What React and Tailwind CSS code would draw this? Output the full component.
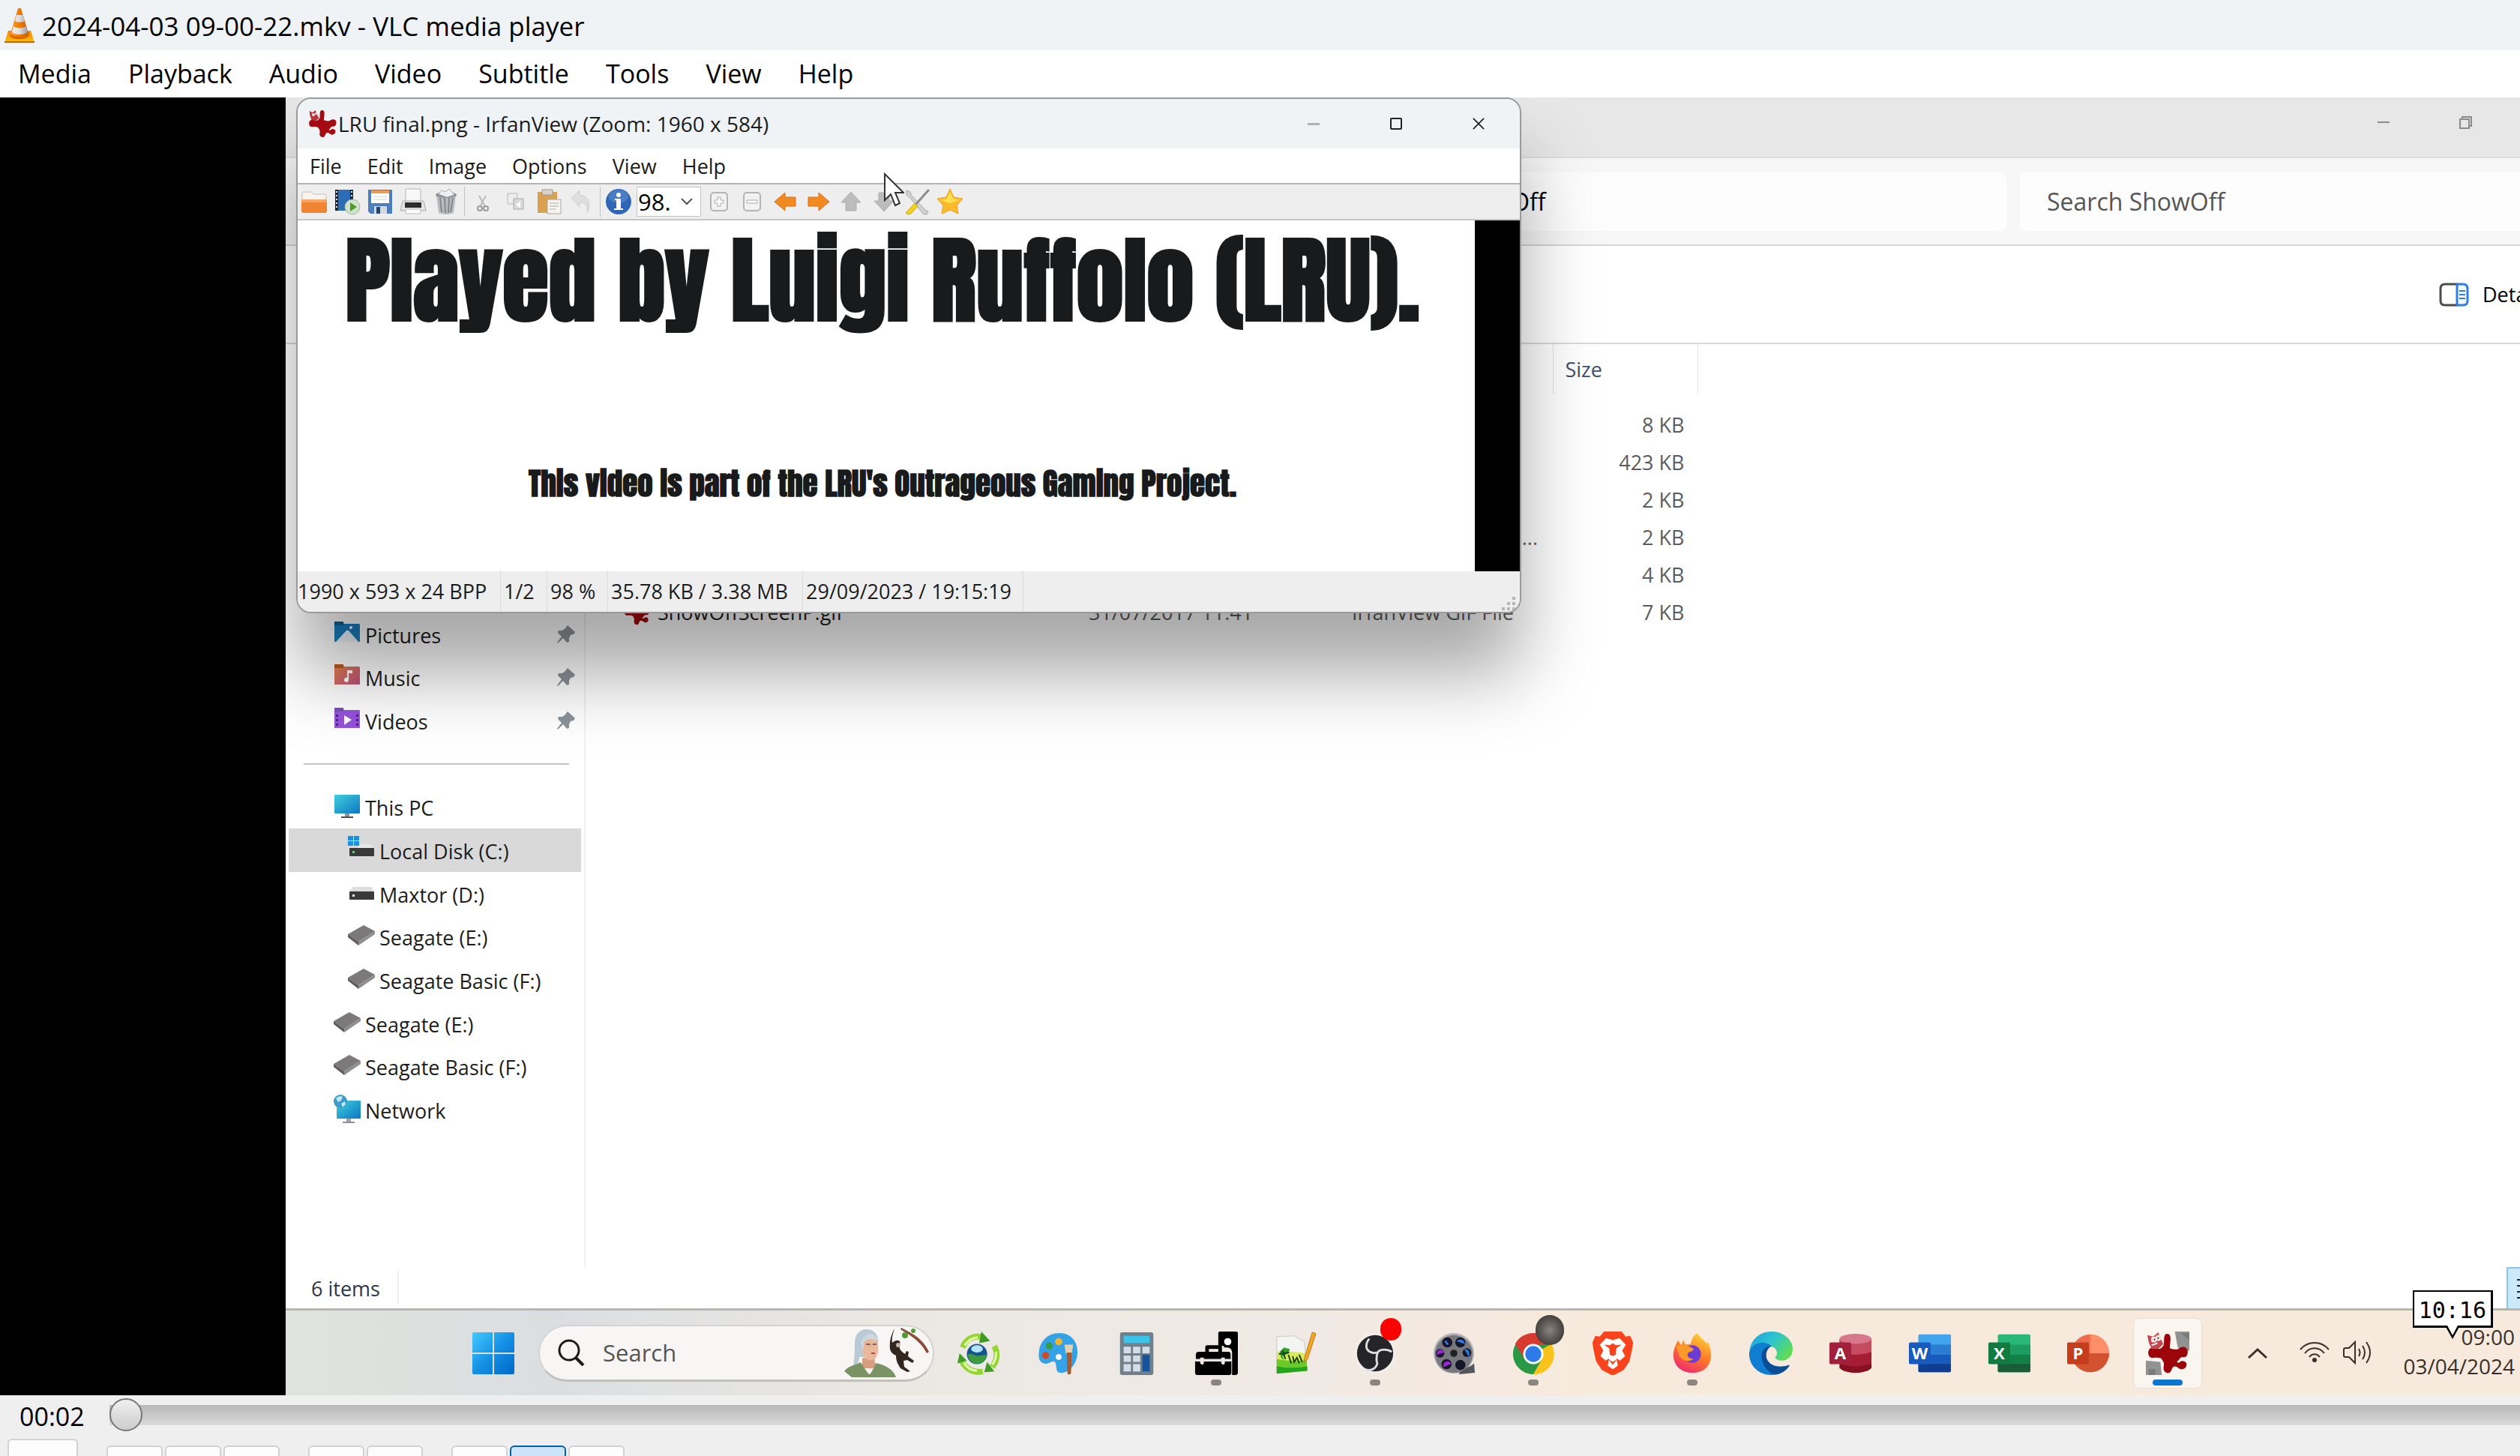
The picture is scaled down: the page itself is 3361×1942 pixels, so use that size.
import React from "react";

/* ---------- window and toolbar drawings ---------- */

const Cone = () => (
  <svg className="h-12 w-10 shrink-0" viewBox="0 0 40 48" aria-hidden="true">
    <defs>
      <linearGradient id="cone" x1="0" x2="1"><stop offset="0" stopColor="#ff9a2e" /><stop offset=".5" stopColor="#f07c00" /><stop offset="1" stopColor="#c85a00" /></linearGradient>
      <linearGradient id="coneW" x1="0" x2="1"><stop offset="0" stopColor="#f2f2f2" /><stop offset=".5" stopColor="#dcdcdc" /><stop offset="1" stopColor="#9c9c9c" /></linearGradient>
      <linearGradient id="base" x1="0" x2="0" y1="0" y2="1"><stop offset="0" stopColor="#f08010" /><stop offset="1" stopColor="#ffc400" /></linearGradient>
    </defs>
    <path d="M5 31h30l5 16H0z" fill="url(#base)" />
    <path d="M0 45h40v2H0z" fill="#b5651d" />
    <path d="M7 37c2 7 24 7 26 0l-3-7H10z" fill="#d86a00" />
    <path d="M18 1h4l10 34c-3 5-21 5-24 0z" fill="url(#cone)" />
    <path d="M16 10h9l2 8c-3 2-10 2-13 0zM12 25c4 3 12 3 17 0l2 8c-5 4-17 4-21 0z" fill="url(#coneW)" />
  </svg>
);

const SplatShape = ({ fill }) => (
  <path
    d="M29 3c4 0 5 3 5 7l-1 13c6 2 9 2 12 1 2-3 8-4 11-1 3 4 2 9-1 12-3 1-5 0-7 1l-5 6c1 2 3 1 4 0 3-3 8-1 9 2 1 4-2 8-6 8-5 0-6-4-10-4-2 0-4 2-5 6-1 3-5 4-8 2-3-2-3-6-2-10 0-4-2-6-4-9-7-2-10 0-14-1-4-2-5-8-2-12 3-3 9-1 14 0 5-3 6-5 6-9 0-6 0-12 4-12z"
    fill={fill}
  />
);

const IrfanSmall = ({ className }) => (
  <svg className={className} viewBox="0 0 60 60" aria-hidden="true">
    <SplatShape fill="#a40a10" />
    <path d="M4 4l6 4 6-5 3 8 4 8-7 6-8-3-3-9z" fill="#b9343c" />
    <circle cx="12" cy="12" r="3" fill="#eee" /><circle cx="17" cy="10" r="2" fill="#eee" />
  </svg>
);

const IrfanBig = () => (
  <svg className="size-[58px]" viewBox="0 0 60 60" aria-hidden="true">
    <path d="M40 0h20v27L44 22zM0 40l20 2 2 18H0z" fill="#929292" />
    <path d="M48 2h12v10zM4 52h9v8H4z" fill="#7b7b7b" />
    <SplatShape fill="#9c060a" />
    <path d="M2 5l8 2 7-6 3 8 4 8-7 7-9 0-4-9z" fill="#c4474e" />
    <circle cx="11" cy="11" r="4" fill="#f1e3e0" /><circle cx="17" cy="9" r="4" fill="#f1e3e0" />
    <circle cx="12" cy="11" r="1" fill="#111" /><circle cx="17" cy="9" r="1" fill="#111" />
    <path d="M8 19l8-3" stroke="#fff" strokeWidth="2" />
  </svg>
);

const T = ({ children }) => <svg className="size-9" viewBox="0 0 36 36" aria-hidden="true">{children}</svg>;

const tool = {
  open: <T><path d="M2 7q0-2 2-2h10l3 3h15q2 0 2 2v8H2z" fill="#f7f3ef" stroke="#c8bfb6" /><path d="M1 15h34v15q0 3-3 3H4q-3 0-3-3z" fill="#ef8433" /><path d="M1 15h34v4H1z" fill="#f6a566" /></T>,
  slide: <T><path d="M2 2h24v28H2z" fill="#2d6db5" /><path d="M2 2h4v28H2zM22 2h4v28h-4z" fill="#18243a" /><path d="M3 5h2M3 10h2M3 15h2M3 20h2M3 25h2M23 5h2M23 10h2" stroke="#dfe8f2" strokeWidth="2" /><circle cx="25" cy="25" r="10" fill="#cfe3cb" stroke="#9fb89a" /><path d="M22 19l9 6-9 6z" fill="#4d9a2a" /></T>,
  save: <T><path d="M2 2h32v32H5l-3-3z" fill="#4d7fbf" /><path d="M6 3h24v17H6z" fill="#fff" /><path d="M6 3h24v4H6z" fill="#ef9a4d" /><path d="M9 11h18M9 15h18" stroke="#cfcfcf" /><path d="M10 24h17v10H10z" fill="#d4d9de" /><path d="M13 25h5v9h-5z" fill="#23446e" /></T>,
  print: <T><path d="M8 1h20v18H8z" fill="#f8f8f8" stroke="#b5b5b5" /><path d="M4 17h28l3 13H1z" fill="#e4e4e4" stroke="#a8a8a8" /><path d="M7 19h22v7H7z" fill="#2c2c2c" /><path d="M8 28h20v6H8z" fill="#fafafa" stroke="#bbb" /></T>,
  trash: <T><path d="M5 9h26l-3 24q-10 4-20 0z" fill="#b9bcc0" /><path d="M10 13l2 19M16 13l1 20M22 13l-1 20M27 13l-3 19" stroke="#83878c" strokeWidth="2" /><ellipse cx="18" cy="9" rx="14" ry="4" fill="#8d9196" /><path d="M8 8l4-5 5 2 5-4 4 4 3 4-10 3z" fill="#edf1f5" stroke="#a9adb2" /></T>,
  cut: <T><path d="M13 10l8 15M22 10l-8 15" stroke="#bbb" strokeWidth="2" /><circle cx="14" cy="27" r="3" fill="none" stroke="#9c9c9c" strokeWidth="2" /><circle cx="22" cy="27" r="3" fill="none" stroke="#9c9c9c" strokeWidth="2" /></T>,
  copy: <T><path d="M7 7h13v14H7z" fill="#ededed" stroke="#b6b6b6" /><path d="M15 14h13v14H15z" fill="#d9d9d9" stroke="#a8a8a8" /><path d="M18 22l6-5v10z" fill="#fff" /></T>,
  paste: <T><path d="M3 5h26v28H3z" fill="#d8a250" /><path d="M9 2h14v7H9z" fill="#d9d5cc" stroke="#99958c" /><path d="M16 15h18v19H16z" fill="#f7f4ee" stroke="#aaa69d" /><path d="M19 20h12M19 24h12M19 28h8" stroke="#aaa" /></T>,
  undo: <T><path d="M4 13L15 3v6c12 1 16 12 10 24 1-10-2-14-10-14v6z" fill="#dedede" stroke="#d0d0d0" /></T>,
  info: <T><circle cx="18" cy="18" r="17" fill="#2f66b5" /><ellipse cx="18" cy="11" rx="13" ry="9" fill="#5489cf" opacity=".7" /><circle cx="18" cy="9" r="3" fill="#fff" /><path d="M13 14h8v13h3v2H12v-2h3V16h-2z" fill="#fff" /></T>,
  plus: <T><rect x="7" y="6" width="22" height="24" rx="4" fill="#f2f2f2" stroke="#b4b4b4" strokeWidth="2" /><path d="M16 12h4v4h4v4h-4v4h-4v-4h-4v-4h4z" fill="#fff" stroke="#a9a9a9" /></T>,
  minus: <T><rect x="7" y="6" width="22" height="24" rx="4" fill="#f2f2f2" stroke="#b4b4b4" strokeWidth="2" /><path d="M11 16h14v4H11z" fill="#fff" stroke="#a9a9a9" /></T>,
  left: <T><path d="M4 18L18 6v6h14v12H18v6z" fill="#f28a22" stroke="#d9701a" /></T>,
  right: <T><path d="M33 18L19 6v6H5v12h14v6z" fill="#f28a22" stroke="#d9701a" /></T>,
  up: <T><path d="M18 5l13 14h-6v11H11V19H5z" fill="#bcbcbc" stroke="#adadad" /></T>,
  down: <T><path d="M18 31L5 17h6V6h14v11h6z" fill="#bcbcbc" stroke="#adadad" /></T>,
  tools: <T><path d="M4 3l5 2 2 5 18 19 4 2-2 4-5-1L9 13 4 9z" fill="#d2d2d2" stroke="#a5a5a5" /><path d="M34 2L16 22" stroke="#8c8c8c" strokeWidth="3" /><path d="M15 20l4 4-9 10q-5 2-7-1z" fill="#f0d21e" stroke="#c9aa10" /></T>,
  star: <T><path d="M18 1l5 11 12 2-8 9 2 11-11-5-11 5 2-11-8-9 12-2z" fill="#fdb92c" stroke="#eda01c" /><path d="M18 4l4 10 9 2-13 4-13-4 9-2z" fill="#ffe14d" /></T>,
};

/* ---------- sidebar drawings ---------- */

const Side = ({ children }) => <svg className="h-10 w-9 shrink-0" viewBox="0 0 36 40" aria-hidden="true">{children}</svg>;

const Disk = () => (
  <Side><path d="M0 17l21-12 15 8-22 14z" fill="#7b7979" /><path d="M0 17v4l14 11v-5z" fill="#5e5c5c" /><path d="M14 32l22-15v-4L14 27z" fill="#8f8d8d" /></Side>
);

const side = {
  pictures: <Side><path d="M1 4q0-1 2-1h9l2 3h20q1 0 1 2v22H1z" fill="#1a7fc0" /><path d="M1 3h12v5H1z" fill="#0f5f99" /><path d="M3 30l14-15 3 0 13 15z" fill="#eef5fa" /><circle cx="23" cy="11" r="2" fill="#fff" /></Side>,
  music: <Side><defs><linearGradient id="mus" x1="0" y1="0" x2="1" y2="1"><stop offset="0" stopColor="#ee8450" /><stop offset="1" stopColor="#b9527e" /></linearGradient></defs><path d="M1 4q0-1 2-1h9l2 3h20q1 0 1 2v22H1z" fill="url(#mus)" /><path d="M1 3h12v5H1z" fill="#b85a1d" /><path d="M18 11h7v4h-5v9a3 3 0 1 1-2-3z" fill="#fff" /></Side>,
  videos: <Side><path d="M1 4q0-1 2-1h9l2 3h20q1 0 1 2v22H1z" fill="#9552dc" /><path d="M1 3h12v5H1z" fill="#7a52ad" /><path d="M3 12h3v3H3zM3 18h3v3H3zM3 24h3v3H3zM30 12h3v3h-3zM30 18h3v3h-3zM30 24h3v3h-3z" fill="#4b2383" /><path d="M14 13l10 6-10 7z" fill="#fff" /></Side>,
  pc: <Side><defs><linearGradient id="pc" x1="0" y1="0" x2="1" y2="1"><stop offset="0" stopColor="#3ed0dc" /><stop offset="1" stopColor="#0f75c4" /></linearGradient></defs><rect x="1" y="4" width="34" height="25" rx="1" fill="url(#pc)" /><path d="M15 29h6v4h-6z" fill="#8d9399" /><path d="M10 33h16v2H10z" fill="#4c5158" /></Side>,
  local: <Side><path d="M0 1h7v6H0zM8 1h7v6H8zM0 8h7v6H0zM8 8h7v6H8z" fill="#1c8fe0" /><path d="M17 12h14l4 5H12z" fill="#e6e6e6" /><rect x="2" y="17" width="33" height="11" rx="1" fill="#3a3a3a" /><rect x="6" y="21" width="3" height="3" fill="#57d36a" /></Side>,
  drive: <Side><path d="M7 11h24l4 6H2z" fill="#dcdcdc" /><rect x="2" y="17" width="33" height="11" rx="1" fill="#3a3a3a" /><rect x="6" y="21" width="3" height="3" fill="#eee" /></Side>,
  disk: <Disk />,
  network: <Side><rect x="4" y="8" width="32" height="24" rx="1" fill="url(#pc)" /><path d="M17 32h6v4h-6z" fill="#a0a5aa" /><path d="M12 36h16v2H12z" fill="#8a9096" /><circle cx="9" cy="9" r="9" fill="#3b9cc9" /><path d="M3 5q5-5 9-2l-2 5-4 2zM10 12l5-3 1 4-4 4z" fill="#bfe4f2" /></Side>,
};

const Pin = () => (
  <svg className="size-7" viewBox="0 0 28 28" aria-hidden="true">
    <path d="M16 2l10 9-2 3-4 1-2 4v5l-3 1-5-6-7 7-1-1 6-8-5-5 1-3h5l4-3z" fill="#8b9299" />
  </svg>
);

const places = [
  ["Pictures", "pictures", "pin"],
  ["Music", "music", "pin"],
  ["Videos", "videos", "pin"],
  null,
  ["This PC", "pc", ""],
  ["Local Disk (C:)", "local", "selected"],
  ["Maxtor (D:)", "drive", "child"],
  ["Seagate (E:)", "disk", "child"],
  ["Seagate Basic (F:)", "disk", "child"],
  ["Seagate (E:)", "disk", ""],
  ["Seagate Basic (F:)", "disk", ""],
  ["Network", "network", ""],
];

/* ---------- taskbar drawings ---------- */

const B = ({ children }) => <svg className="size-[58px]" viewBox="0 0 60 60" aria-hidden="true">{children}</svg>;

const Office = ({ letter, c1, c2, c3, c4, tag }) => (
  <B>
    <rect x="14" y="4" width="45" height="52" rx="2" fill={c1} />
    <path d="M14 18h45v14H14z" fill={c2} /><path d="M14 32h45v12H14z" fill={c3} /><path d="M14 44h45v10q0 2-2 2H16q-2 0-2-2z" fill={c4} />
    <rect x="1" y="15" width="30" height="30" rx="2" fill={tag} />
    <text x="16" y="38" textAnchor="middle" fontFamily="Open Sans, sans-serif" fontWeight="700" fontSize="23" fill="#fff">{letter}</text>
  </B>
);

const apps = [
  {
    name: "Recycle",
    icon: (
      <B>
        <g fill="none" stroke="#93d62f" strokeWidth="8"><path d="M8 22C13 10 24 4 36 8" /><path d="M52 20c5 10 4 20-3 29" /><path d="M36 55C22 58 10 50 6 38" /></g>
        <path d="M11 19c4-6 10-10 18-11M54 28c1 7-1 13-5 18M28 54c-8 0-14-4-18-11" stroke="#e8fbb4" strokeWidth="3" fill="none" />
        <g fill="#3f9b25"><path d="M34 0l12 13-15 3z" /><path d="M52 55l-14 1 4-14z" /><path d="M1 44L4 30l10 10z" /></g>
        <circle cx="28" cy="31" r="14" fill="#15558f" />
        <path d="M15 32c6-4 10 4 18 1l9-1c-2 9-9 14-17 12-5-2-9-6-10-12z" fill="#3c9b3c" />
        <ellipse cx="28" cy="24" rx="8" ry="5" fill="#b3e4f8" />
      </B>
    ),
  },
  { name: "Paint", icon: <B><path d="M32 2c16 0 25 12 25 26 0 17-12 30-24 29-7-1-4-9-7-15-4-3-8 4-15 2C3 42 3 34 4 27 6 12 17 2 32 2z" fill="#33a2e6" /><circle cx="18" cy="20" r="5" fill="#3b9b45" /><circle cx="31" cy="14" r="5" fill="#f5b52a" /><circle cx="13" cy="33" r="5" fill="#cc4b2c" /><circle cx="31" cy="35" r="4" fill="#fff" /><path d="M39 18h12l-2 13h-8z" fill="#e6cfae" /><path d="M42 29h7l-1 29q-3 3-5 0z" fill="#a65c2e" /></B> },
  { name: "Calculator", icon: <B><rect x="7" y="1" width="46" height="59" rx="3" fill="#6f7f8b" /><rect x="12" y="6" width="36" height="10" rx="1" fill="#3ac4ea" /><g fill="#d4dde6"><path d="M12 21h10v9H12zM25 21h10v9H25zM38 21h10v9H38zM12 33h10v9H12zM25 33h10v9H25zM12 45h10v10H12zM25 45h10v10H25z" /></g><path d="M38 32h10v23H38z" fill="#17529b" /></B> },
  { name: "Toolbox", running: true, icon: <B><path d="M33 2q0-2 2-2h22q3 0 3 2v55q0 3-4 3h-4V30q0-8-7-8h-4v-2h-8z" fill="#000" /><circle cx="46" cy="14" r="5" fill="#fff" /><path d="M2 32q0-4 4-4h9v-6q0-3 3-3h17q3 0 3 3v6h9q3 0 3 4v6H2z" fill="#000" /><path d="M20 24h13v4H20z" fill="#eee7e2" /><path d="M1 41h50v16q0 3-3 3H4q-3 0-3-3z" fill="#000" /><path d="M2 38h48v3H2z" fill="#eee7e2" /><path d="M8 36h5v8l-2 2-3-2zM37 36h5v8l-2 2-3-2z" fill="#eee7e2" /></B> },
  {
    name: "Notepad++",
    icon: (
      <B>
        <path d="M4 7l24-1 14 8 4 40-42 4z" fill="#f3f5f2" stroke="#c5c7c2" />
        <path d="M4 28q20-2 40 2l2 24-42 4z" fill="#d9ea5c" />
        <path d="M4 38q20 4 41 1l1 15-42 4z" fill="#6cc92a" /><path d="M4 48q20 4 42 0v6L4 58z" fill="#25a51b" />
        <path d="M8 28l6-6 8 2-2 6-8 4 2 6-4-4z" fill="#2fa02a" />
        <path d="M7 31l14-2M12 26l4 12M20 32l4 12M26 34l2 8 4-6 3 8M35 32l4 10" stroke="#173f16" strokeWidth="2" fill="none" />
        <path d="M53 1l5 2-12 36-4 3v-5z" fill="#f2a623" stroke="#b9741a" />
      </B>
    ),
  },
  { name: "OBS Studio", running: true, icon: <B><circle cx="30" cy="30" r="28" fill="#f2efec" /><circle cx="30" cy="30" r="25" fill="#252429" /><path d="M22 10c-6 7-5 15 1 18 5 2 8 2 9 0M53 28c-6-4-15-4-19 0-3 5-2 14-1 16-2 8-10 11-17 8" stroke="#dedede" strokeWidth="3" fill="none" /></B>, badge: "rec" },
  { name: "Video Editor", icon: <B><circle cx="30" cy="30" r="28" fill="#b3b4b8" /><path d="M40 52q12-2 18-8l1 13-22 2z" fill="#54565c" /><circle cx="30" cy="31" r="26" fill="#77797f" /><g fill="#171527"><circle cx="21" cy="15" r="7" /><circle cx="39" cy="15" r="7" /><circle cx="11" cy="30" r="6" /><circle cx="48" cy="29" r="6" /><circle cx="20" cy="45" r="7" /><circle cx="39" cy="46" r="7" /></g><path d="M8 30a4 4 0 0 1 7-2zM17 47a4 4 0 0 1 7-3z" fill="#9b25d6" stroke="#9b25d6" strokeWidth="3" /><path d="M37 13a4 4 0 0 1 6 2zM47 26a4 4 0 0 1 3 5zM18 13l4 5z" fill="#2a79dd" stroke="#2a79dd" strokeWidth="3" /><circle cx="30" cy="30" r="5" fill="#202124" /></B> },
  { name: "Chrome", running: true, icon: <B><circle cx="30" cy="31" r="28" fill="#2b9846" /><path d="M30 31l25-14a28 28 0 0 1-25 42l12-21z" fill="#fac31b" /><path d="M5 17l13 21 12-20h25A28 28 0 0 0 5 17z" fill="#d93a2f" /><circle cx="30" cy="31" r="14" fill="#fff" /><circle cx="30" cy="31" r="11" fill="#2c7be8" /></B>, badge: "face" },
  { name: "Brave", icon: <B><path d="M18 0h24l6 7 6-1 4 9-1 8-4 18-8 12-15 8-15-8-8-12L3 23l-1-8 4-9 6 1z" fill="#f9431c" /><path d="M30 12l9-3 9 9-5 8 4 8-7 6-5-3 2 10-7 5-7-5 2-10-5 3-7-6 4-8-5-8 9-9z" fill="#fff" /><path d="M30 16l4 3 8-1-7 5-1 9-4 2-4-2-1-9-7-5 8 1zM24 38l6 4 6-4-6 8z" fill="#f9431c" /></B> },
  { name: "Firefox", running: true, icon: <B><defs><linearGradient id="ff" x1=".8" y1="0" x2=".3" y2="1"><stop offset="0" stopColor="#ffd93c" /><stop offset=".5" stopColor="#ff7b26" /><stop offset="1" stopColor="#ee2a6e" /></linearGradient></defs><path d="M37 2c4 7 9 9 12 14l3-1c9 20 3 41-21 42C12 57 3 44 4 30c1-8 4-12 6-18l5 7 3-8 2 7 8-1c1-7 4-12 9-15z" fill="url(#ff)" /><circle cx="30" cy="31" r="12" fill="#6c3bd2" /><path d="M8 20c8-4 18 0 24 4-2 5-6 3-8 6-2 4 2 8 8 8-9 6-21 0-21-9z" fill="#ff9a2a" /></B> },
  { name: "Edge", icon: <B><defs><linearGradient id="ed" x1="0" y1="0" x2="1" y2=".6"><stop offset="0" stopColor="#1d9be0" /><stop offset=".5" stopColor="#2bc3d2" /><stop offset="1" stopColor="#5edc58" /></linearGradient></defs><path d="M0 28C2 10 15 0 31 0c17 0 29 12 29 24 0 10-7 16-15 16-7 0-10-3-9-5 4-3 3-12-5-14C18 15 5 17 0 28z" fill="url(#ed)" /><path d="M0 29c4-14 20-18 31-9-8 3-9 12-7 18 5 12 20 12 31 8C50 55 41 60 31 60 13 60-1 47 0 29z" fill="#0f7ed0" /><path d="M31 20c-13 0-16 12-12 23 3 9 11 17 20 16 8-2 14-7 17-13-14 5-28 2-32-9-2-7 1-14 7-17z" fill="#0b4e96" /></B> },
  { name: "Access", icon: <B><path d="M15 10h44v40q-4 6-22 7-18-1-22-7z" fill="#a51c33" /><path d="M15 10h44v18q-22 8-44 0z" fill="#c54c60" /><path d="M15 44q22 8 44 0v6q-4 6-22 7-18-1-22-7z" fill="#870f22" /><ellipse cx="37" cy="10" rx="22" ry="7" fill="#d7788a" /><rect x="1" y="15" width="30" height="30" rx="2" fill="#a1203b" /><text x="16" y="38" textAnchor="middle" fontFamily="Open Sans, sans-serif" fontWeight="700" fontSize="23" fill="#fff">A</text></B> },
  { name: "Word", icon: <Office letter="W" c1="#41a5ee" c2="#2b7cd3" c3="#185abd" c4="#103f91" tag="#185abd" /> },
  { name: "Excel", icon: <Office letter="X" c1="#29b877" c2="#1f9c61" c3="#128047" c4="#1a5c38" tag="#107c41" /> },
  { name: "PowerPoint", icon: <B><circle cx="33" cy="30" r="26" fill="#ee6c4c" /><path d="M33 4a26 26 0 0 1 26 26H33z" fill="#ff8f6b" /><path d="M7 30h52a26 26 0 0 1-52 0z" fill="#d35230" /><rect x="1" y="15" width="30" height="30" rx="2" fill="#c43e1c" /><text x="16" y="38" textAnchor="middle" fontFamily="Open Sans, sans-serif" fontWeight="700" fontSize="23" fill="#fff">P</text></B> },
  { name: "IrfanView", active: true, icon: <IrfanBig /> },
];

const Highlight = () => (
  <svg className="h-[66px] w-[118px] shrink-0" viewBox="0 0 118 66" aria-hidden="true">
    <path d="M14 20C14 6 24 2 30 2c10 0 16 8 15 17l-8 20H20c0 8-4 12-8 14 1-9 2-20 2-33z" fill="#b9cad6" />
    <path d="M24 40h16l2 14H24z" fill="#d99e80" />
    <path d="M24 16c8-5 16-4 20 0 2 9 2 18-2 24-4 5-11 4-15-1-4-7-5-15-3-23z" fill="#e9b799" />
    <path d="M22 20c3-9 8-12 14-12 5 1 8 5 8 9-7-3-14-3-18 2l-1 12z" fill="#cad8e1" />
    <path d="M29 22h6M38 22h5" stroke="#7b6257" strokeWidth="2" /><path d="M36 34h5" stroke="#b3473f" strokeWidth="2" />
    <path d="M0 58c6-8 15-8 22-12 5 8 10 16 12 16 3-3 6-10 8-15 11 2 24 8 27 19H10z" fill="#7a9365" />
    <path d="M67 1c-5 9-7 18-6 27 1 5 4 7 8 9 0 8 3 12 6 17l9 5 4-1-8-6-1-8 5-1 7 4 2-3-8-6 1-6-3-1-2 4c-5-4-8-6-7-12 1-4 0-6-2-6-4-1-6 2-8 3-1-7 1-12 3-19z" fill="#33261f" />
    <circle cx="72" cy="23" r="3" fill="#c3b4a8" />
    <path d="M76 0c13 7 28 13 37 32l-3 2C102 18 88 10 75 2z" fill="#8b4a35" />
    <circle cx="81" cy="10" r="4" fill="#4e9b35" /><circle cx="92" cy="4" r="3" fill="#4e9b35" />
  </svg>
);

/* ---------- parts ---------- */

const vlcMenu = ["Media", "Playback", "Audio", "Video", "Subtitle", "Tools", "View", "Help"];
const irfanMenu = ["File", "Edit", "Image", "Options", "View", "Help"];
const sizes = ["8 KB", "423 KB", "2 KB", "2 KB", "4 KB", "7 KB"];

const ToolButton = ({ name }) => (
  <button aria-label={name} className="flex w-11 items-center justify-center">{tool[name]}</button>
);

function IrfanWindow() {
  return (
    <section className="absolute left-3.5 top-0 flex w-[1634px] flex-col overflow-hidden rounded-[20px] border-2 border-[#9a9a9a] bg-white text-[27px] text-[#1c1c1c] shadow-[0_80px_100px_rgba(0,0,0,0.35)]">
      <header className="flex h-[66px] items-center bg-[#f0f3f5] pl-3">
        <IrfanSmall className="h-10 w-[42px]" />
        <h2 className="text-[28px]">LRU final.png - IrfanView (Zoom: 1960 x 584)</h2>
        <div className="ml-auto flex">
          <button aria-label="Minimize" className="flex h-16 w-[110px] items-center justify-center"><span className="h-[3px] w-4 bg-[#b0b0b0]" /></button>
          <button aria-label="Maximize" className="flex h-16 w-[110px] items-center justify-center"><span className="size-4 rounded-xs border-2 border-[#222]" /></button>
          <button aria-label="Close" className="flex h-16 w-[110px] items-center justify-center">
            <svg className="size-4" viewBox="0 0 18 18"><path d="M1 1l16 16M17 1L1 17" stroke="#222" strokeWidth="2" /></svg>
          </button>
        </div>
      </header>
      <nav className="flex h-[46px] items-center gap-[34px] bg-white pl-4 pt-0.5">
        {irfanMenu.map((m) => <button key={m}>{m}</button>)}
      </nav>
      <div className="flex h-[50px] items-center border-b-2 border-t-2 border-b-[#c6c6c6] border-t-[#b4b4b4] bg-[#eeeeee]">
        {["open", "slide", "save", "print", "trash"].map((n) => <ToolButton key={n} name={n} />)}
        <span className="mx-0.5 h-10 w-px bg-[#c2c2c2]" />
        {["cut", "copy", "paste", "undo"].map((n) => <ToolButton key={n} name={n} />)}
        <span className="mx-0.5 h-10 w-px bg-[#c2c2c2]" />
        <ToolButton name="info" />
        <label className="relative ml-0.5 mr-0.5 flex h-10 w-[86px] items-center border border-[#c4c4c4] bg-white">
          <select aria-label="Zoom" className="w-full appearance-none bg-transparent pl-px text-[31px] leading-9 text-black"><option>98.</option></select>
          <svg className="pointer-events-none absolute right-2.5 h-2.5 w-4" viewBox="0 0 16 10"><path d="M1 1l7 7 7-7" fill="none" stroke="#555" strokeWidth="2" /></svg>
        </label>
        {["plus", "minus", "left", "right", "up", "down", "tools", "star"].map((n) => <ToolButton key={n} name={n} />)}
      </div>
      <div className="flex h-[468px] bg-black">
        <div className="flex w-[1570px] flex-col items-center bg-white pr-2.5 font-['Anton','Roboto_Condensed',sans-serif] font-bold text-[#191a1b]">
          <h1 className="mt-2.5 whitespace-nowrap text-[126px] leading-[140px]">Played by Luigi Ruffolo (LRU).</h1>
          <p className="mt-44 whitespace-nowrap text-[41px] leading-[50px]">This video is part of the LRU's Outrageous Gaming Project.</p>
        </div>
      </div>
      <footer className="flex h-[54px] items-center bg-[#eeeeee] leading-[56px]">
        <span className="w-[271px] whitespace-nowrap border-r border-[#dcdcdc]">1990 x 593 x 24 BPP</span>
        <span className="w-[62px] whitespace-nowrap border-r border-[#dcdcdc] pl-1">1/2</span>
        <span className="w-[81px] whitespace-nowrap border-r border-[#dcdcdc] pl-1">98 %</span>
        <span className="w-[260px] whitespace-nowrap border-r border-[#dcdcdc] pl-1">35.78 KB / 3.38 MB</span>
        <span className="w-[294px] whitespace-nowrap border-r border-[#dcdcdc] pl-1">29/09/2023 / 19:15:19</span>
        <svg className="ml-auto mr-1 size-5 self-end" viewBox="0 0 20 20" aria-hidden="true">
          <path d="M14 0h4v4h-4zM14 7h4v4h-4zM14 14h4v4h-4zM7 7h4v4H7zM7 14h4v4H7zM0 14h4v4H0z" fill="#b5b5b5" />
        </svg>
      </footer>
    </section>
  );
}

function Sidebar() {
  return (
    <aside className="w-[400px] shrink-0 border-r-2 border-[#f1f1f1] pl-1 pr-1 pt-[358px]">
      <ul className="grid h-[692px] grid-rows-12">
        {places.map((p, i) =>
          p === null ? (
            <li key={i} className="flex items-center"><hr className="ml-5 mr-4 w-full border-t-2 border-[#c4c4c4]" /></li>
          ) : (
            <li key={i} className={p[2] === "selected" ? "flex bg-[#d9d9d9]" : "flex"}>
              <button className={p[2] === "selected" || p[2] === "child" ? "flex flex-1 items-center gap-1.5 pl-[79px]" : "flex flex-1 items-center gap-1.5 pl-[60px] pr-1.5"}>
                {side[p[1]]}
                <span className="whitespace-nowrap pt-1">{p[0]}</span>
                {p[2] === "pin" && <span className="ml-auto"><Pin /></span>}
              </button>
            </li>
          )
        )}
      </ul>
    </aside>
  );
}

function Files() {
  return (
    <table className="w-[1484px] table-fixed self-start text-left text-[#5c5c5c]">
      <colgroup><col className="w-[671px]" /><col className="w-[347px]" /><col className="w-[272px]" /><col /></colgroup>
      <thead>
        <tr className="h-[66px] text-[#42506e]">
          <th /><th /><th className="border-r border-[#e2e2e2]" />
          <th className="border-r border-[#e2e2e2] pl-4 pt-0.5 font-normal">Size</th>
        </tr>
        <tr className="h-[17px]"><td colSpan={4} /></tr>
      </thead>
      <tbody>
        {sizes.map((s, i) => (
          <tr key={i} className="h-[50px]">
            <td className="pl-[50px] text-[#222]">{i === 5 && <span className="flex items-center gap-2.5"><IrfanSmall className="h-10 w-9" />ShowOffScreenP.gif</span>}</td>
            <td>{i === 5 && "31/07/2017 11:41"}</td>
            <td className="whitespace-nowrap text-right">
              {i === 3 && <span className="pr-5">o...</span>}
              {i === 5 && <span className="pr-[52px]">IrfanView GIF File</span>}
            </td>
            <td className="pr-[18px] text-right">{s}</td>
          </tr>
        ))}
      </tbody>
    </table>
  );
}

function Taskbar() {
  return (
    <footer className="flex h-[116px] shrink-0 items-center border-t-[3px] border-[#b9b5b0] bg-[linear-gradient(90deg,#e0e2dc_0%,#dbdee1_12%,#ebe8e3_27%,#f0e9e4_45%,#f7eadd_58%)] pl-[249px] pr-[7px]">
      <button aria-label="Start" className="shrink-0">
        <svg className="size-14" viewBox="0 0 56 56">
          <defs><linearGradient id="win" x1="0" y1="0" x2="1" y2="1"><stop offset="0" stopColor="#45cbfd" /><stop offset=".5" stopColor="#1590e4" /><stop offset="1" stopColor="#0068c8" /></linearGradient></defs>
          <path d="M0 2q0-2 2-2h25v27H0zM29 0h25q2 0 2 2v25H29zM0 29h27v27H2q-2 0-2-2zM29 29h27v25q0 2-2 2H29z" fill="url(#win)" />
        </svg>
      </button>
      <label className="ml-8 flex h-[76px] w-[528px] shrink-0 items-center rounded-full border-2 border-b-[3px] border-[#d5d3d0] border-b-[#c2c0bd] bg-[#f8f6f4] pl-6">
        <svg className="size-9 shrink-0" viewBox="0 0 36 36" aria-hidden="true"><circle cx="15" cy="15" r="13" fill="none" stroke="#1b1b1b" strokeWidth="3" /><path d="M24 25l10 10" stroke="#1b1b1b" strokeWidth="4" /></svg>
        <input type="search" placeholder="Search" aria-label="Search Windows" className="ml-6 min-w-0 flex-1 bg-transparent text-[31px] leading-10 placeholder:text-[#555]" />
        <Highlight />
      </label>
      <nav className="ml-1.5 flex w-[1692px] shrink-0">
        {apps.map((a) => (
          <button key={a.name} aria-label={a.name} className="relative flex h-[94px] flex-1 items-center justify-center">
            <span className={a.active ? "flex h-[94px] w-[92px] items-center justify-center rounded-lg border border-[#eadfd6] bg-[#fbf5f0]" : "flex"}>{a.icon}</span>
            {a.badge === "rec" && <span className="absolute left-[60px] top-0 h-[30px] w-7 rounded-full bg-[#fe0000]" />}
            {a.badge === "face" && <span className="absolute -top-1 left-14 h-10 w-[38px] rounded-full bg-radial from-[#8b8480] to-[#2b2826]" />}
            {a.running && <span className="absolute bottom-1 h-2 w-3.5 rounded-full bg-[#8a8581]" />}
            {a.active && <span className="absolute bottom-1 h-2 w-10 rounded-full bg-[#0a76d2]" />}
          </button>
        ))}
      </nav>
      <div className="ml-auto flex shrink-0 items-center text-[#3a3029]">
        <button aria-label="Show hidden icons"><svg className="h-4 w-7" viewBox="0 0 28 16"><path d="M2 14L14 3l12 11" fill="none" stroke="#3a3029" strokeWidth="3" /></svg></button>
        <svg className="ml-[42px] h-8 w-10" viewBox="0 0 40 32" role="img" aria-label="Wi-Fi">
          <g fill="none" stroke="#3a3029" strokeWidth="2"><path d="M1 11C11-1 29-1 39 11M7 16c7-9 19-9 26 0M13 21c4-5 10-5 14 0" /></g><circle cx="20" cy="25" r="3" fill="#3a3029" />
        </svg>
        <svg className="ml-[18px] h-9 w-10" viewBox="0 0 40 36" role="img" aria-label="Volume">
          <g fill="none" stroke="#3a3029" strokeWidth="2"><path d="M1 13q0-2 2-2h5l8-8v28l-8-8H3q-2 0-2-2zM21 12q3 5 0 10M26 8q6 9 0 18M31 3q10 14 0 28" /></g>
        </svg>
        <time className="ml-10 pb-1 text-right text-[28px] leading-[39px]">09:00<br />03/04/2024</time>
      </div>
    </footer>
  );
}

export default function App() {
  return (
    <main className="flex h-screen flex-col overflow-hidden bg-[#efefef] font-['Open_Sans','Noto_Sans',sans-serif] text-black">
      <header className="flex h-[67px] shrink-0 items-center gap-2.5 bg-[#eff3f6] pl-1.5">
        <Cone />
        <h1 className="pt-1 text-[35px]">2024-04-03 09-00-22.mkv - VLC media player</h1>
      </header>
      <nav className="flex h-[63px] shrink-0 items-center gap-[49px] bg-white pl-6 text-[34px]">
        {vlcMenu.map((m) => <button key={m}>{m}</button>)}
      </nav>

      <section className="flex min-h-0 flex-1 bg-black pl-[381px]">
        <div className="relative flex min-w-0 flex-1 flex-col overflow-hidden bg-white text-[27px] text-[#1c1c1c]">
          <div className="flex h-[81px] shrink-0 justify-end border-b-2 border-[#dcdcdc] bg-[#e7e7e7] pr-[17px]">
            <button aria-label="Minimize Explorer" className="flex h-[66px] w-[110px] items-center justify-center"><span className="h-0.5 w-4 bg-[#8a8a8a]" /></button>
            <button aria-label="Restore Explorer" className="flex h-[66px] w-[110px] items-center justify-center">
              <svg className="size-[18px]" viewBox="0 0 18 18"><path d="M1 5h12v12H1zM4 5V2h12v12h-3" fill="none" stroke="#8a8a8a" strokeWidth="2" /></svg>
            </button>
          </div>
          <div className="flex h-[117px] shrink-0 items-center gap-[18px] border-b-2 border-[#d6d6d6] bg-[#f7f7f7] pl-[400px] text-[32px]">
            <div className="flex h-[78px] w-[1895px] items-center rounded-lg bg-[#fdfdfd] pl-[1153px] text-black">ShowOff</div>
            <input placeholder="Search ShowOff" aria-label="Search ShowOff" className="h-[78px] min-w-0 flex-1 rounded-l-lg bg-[#fdfdfd] pl-9 placeholder:text-[#555]" />
          </div>
          <div className="flex h-[131px] shrink-0 justify-end border-b-2 border-[#d9d9d9]">
            <button className="flex w-[108px] items-center gap-[18px] overflow-hidden">
              <svg className="h-8 w-10 shrink-0" viewBox="0 0 40 32" aria-hidden="true">
                <path d="M24 2H8q-6 0-6 6v16q0 6 6 6h16" fill="none" stroke="#4b4b4b" strokeWidth="3" />
                <path d="M24 2h8q6 0 6 6v16q0 6-6 6h-8z" fill="#f4f9ff" stroke="#2f7de0" strokeWidth="3" />
                <path d="M27 11h8M27 16h8M27 21h8" stroke="#2f7de0" strokeWidth="2" />
              </svg>
              <span className="pt-0.5 text-black">Details</span>
            </button>
          </div>
          <div className="flex min-h-0 flex-1">
            <Sidebar />
            <Files />
          </div>
          <div className="flex h-[55px] shrink-0 items-center pl-[34px] text-[#2f3650]">
            <span className="w-[117px] border-r-2 border-[#f0f0f0] pt-1">6 items</span>
            <button aria-label="Details view" className="ml-auto flex h-full w-[18px] items-center justify-end border-l-2 border-t-2 border-[#8cc5ea] bg-[#cce8fb]">
              <svg className="h-8 w-1" viewBox="0 0 4 32"><path d="M0 4h4M0 12h4M0 20h4M0 28h4" stroke="#222" strokeWidth="2" /></svg>
            </button>
          </div>
          <Taskbar />

          <IrfanWindow />
          <svg className="absolute left-[797px] top-[100px] h-[46px] w-7" viewBox="0 0 28 46" aria-hidden="true">
            <path d="M2 2v35l8-8 6 15 6-3-6-14h11z" fill="#fff" stroke="#333" strokeWidth="2" />
          </svg>
          <div role="tooltip" className="absolute bottom-[75px] right-9 flex flex-col items-center">
            <span className="border-2 border-b-[3px] border-r-[3px] border-black bg-white px-1.5 pt-1 font-['DejaVu_Sans_Mono',monospace] text-[30px] leading-[41px] text-black">10:16</span>
            <svg className="-mt-[3px] h-[18px] w-5" viewBox="0 0 20 18" aria-hidden="true"><path d="M0 0h20l-10 18z" fill="#000" /><path d="M3 0h14l-7 13z" fill="#fff" /></svg>
          </div>
        </div>
      </section>

      <footer className="flex h-[81px] shrink-0 flex-col">
        <div className="flex h-[58px] shrink-0 items-center pb-1.5 pl-[26px]">
          <span className="w-[120px] pt-1 text-[34px] leading-[52px]">00:02</span>
          <input
            type="range" aria-label="Position" min="0" max="100" defaultValue="0"
            className="h-[27px] flex-1 appearance-none bg-linear-to-b from-[#b7b7b7] to-[#dadada] [&::-webkit-slider-thumb]:size-11 [&::-webkit-slider-thumb]:appearance-none [&::-webkit-slider-thumb]:rounded-full [&::-webkit-slider-thumb]:border-2 [&::-webkit-slider-thumb]:border-[#777] [&::-webkit-slider-thumb]:bg-linear-to-b [&::-webkit-slider-thumb]:from-[#f0f0f0] [&::-webkit-slider-thumb]:to-[#cccccc]"
          />
        </div>
        <div className="flex items-start gap-[3px] pl-2.5">
          <button aria-label="Play" className="mr-[35px] h-6 w-[94px] rounded-t-md border-2 border-b-0 border-[#d2d2d2] bg-[#fdfdfd]" />
          {["Previous", "Stop", "Next", "Full screen", "Extended settings", "Playlist", "Loop", "Random"].map((n) => (
            <button
              key={n} aria-label={n}
              className={
                n === "Loop"
                  ? "mt-[9px] h-4 w-[75px] rounded-t-md border-2 border-b-0 border-[#0060ae] bg-[#cce4f8]"
                  : n === "Next" || n === "Extended settings"
                  ? "mr-[35px] mt-[9px] h-4 w-[75px] rounded-t-md border-2 border-b-0 border-[#d2d2d2] bg-[#fdfdfd]"
                  : "mt-[9px] h-4 w-[75px] rounded-t-md border-2 border-b-0 border-[#d2d2d2] bg-[#fdfdfd]"
              }
            />
          ))}
        </div>
      </footer>
    </main>
  );
}
